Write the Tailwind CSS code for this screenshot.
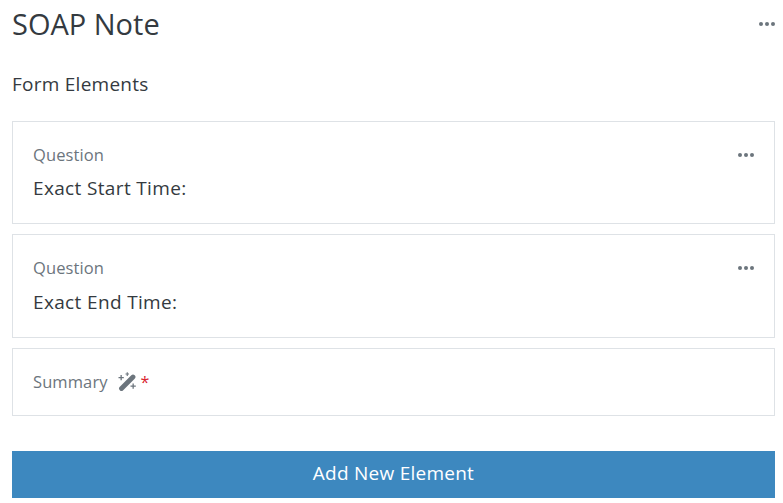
<!DOCTYPE html>
<html lang="en">
<head>
  <meta charset="UTF-8">
  <title>SOAP Note</title>
  <script src="https://cdn.jsdelivr.net/npm/@tailwindcss/browser@4"></script>
</head>
<body class="bg-white font-['Open_Sans',sans-serif] text-[#343a40]">
  <div class="pl-3 pr-2 h-[503px] overflow-hidden">
    <div class="flex justify-between h-[51px] items-center">
      <h1 class="text-[29px] leading-[34px] -mt-[3px]">SOAP Note</h1>
      <svg class="w-4 h-1 mb-1" viewBox="0 0 16 4" fill="#6c757d"><circle cx="2" cy="2" r="2"/><circle cx="8" cy="2" r="2"/><circle cx="14" cy="2" r="2"/></svg>
    </div>
    <h2 class="text-[19px] tracking-[0.25px] leading-[24px] mt-[21px] mb-[25px]">Form Elements</h2>

    <div class="flex flex-col gap-[10px]">
      <div class="border border-[#dee2e6] h-[103px] px-5 pt-[21px]">
        <div class="flex justify-between items-center">
          <span class="text-[#6c757d] text-[16.5px] tracking-[0.1px] leading-6">Question</span>
          <svg class="w-4 h-1 mb-px" viewBox="0 0 16 4" fill="#6c757d"><circle cx="2" cy="2" r="2"/><circle cx="8" cy="2" r="2"/><circle cx="14" cy="2" r="2"/></svg>
        </div>
        <p class="text-[19px] tracking-[0.35px] leading-6 mt-[9px]">Exact Start Time:</p>
      </div>
      <div class="border border-[#dee2e6] h-[104px] px-5 pt-[21px]">
        <div class="flex justify-between items-center">
          <span class="text-[#6c757d] text-[16.5px] tracking-[0.1px] leading-6">Question</span>
          <svg class="w-4 h-1 mb-px" viewBox="0 0 16 4" fill="#6c757d"><circle cx="2" cy="2" r="2"/><circle cx="8" cy="2" r="2"/><circle cx="14" cy="2" r="2"/></svg>
        </div>
        <p class="text-[19px] tracking-[0.35px] leading-6 mt-[10px]">Exact End Time:</p>
      </div>
      <div class="border border-[#dee2e6] h-[68px] px-5 flex items-center">
        <span class="text-[#6c757d] text-[16.5px] tracking-[0.1px] leading-6">Summary</span>
        <svg class="w-5 h-5 ml-2" viewBox="0 0 20 20" fill="#6c757d">
          <path d="M5.500 16.500L17 5" stroke="#6c757d" stroke-width="4.800" stroke-linecap="round"/>
          <path d="M2.500 4.900h2V2.900h1.300v2h2v1.300h-2v2H4.500v-2h-2zM9.500 1.500h1.200V.2h1.100v1.300h1.200v1.100h-1.200v1.300h-1.100V2.600H9.500zM14.500 13.500h2V11.500h1.300v2h2v1.300h-2v2h-1.300v-2h-2z"/>
        </svg>
        <span class="text-[#d9232f] ml-[5px] text-base leading-6">*</span>
      </div>
    </div>

    <button class="block w-full h-[47px] mt-[35px] pb-0.5 bg-[#3d88bf] text-white text-[19px] tracking-[0.25px] text-center">Add New Element</button>
  </div>
</body>
</html>
